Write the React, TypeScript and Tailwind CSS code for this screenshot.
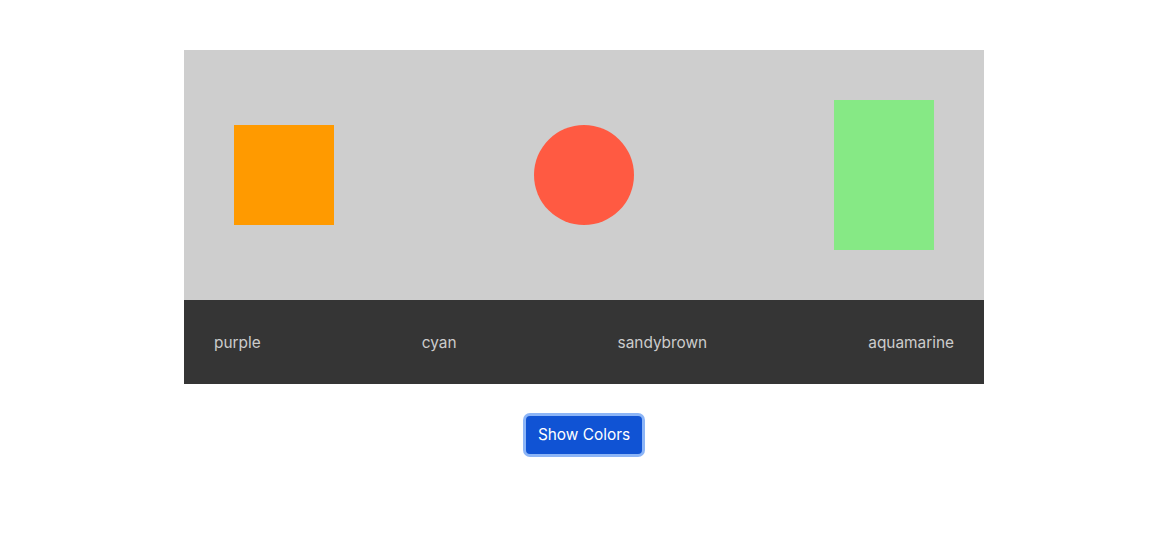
export default function App() {
  const labels = ['purple', 'cyan', 'sandybrown', 'aquamarine'];

  return (
    <div className="flex flex-col items-center bg-white pt-[50px] pb-[100px] pl-[6px] font-['Inter','Liberation_Sans',sans-serif]">
      <div className="w-[800px]">
        <div className="flex h-[250px] items-center justify-between bg-[#cecece] px-[50px]">
          <div className="h-[100px] w-[100px] bg-[#ff9a00]" />
          <div className="h-[100px] w-[100px] rounded-full bg-[#ff5a42]" />
          <div className="h-[150px] w-[100px] bg-[#86e985]" />
        </div>
        <div className="flex h-[84px] items-center justify-between bg-[#353535] px-[30px] pt-px text-[15.4px] text-[#cccccc]">
          {labels.map((label) => (
            <span key={label}>{label}</span>
          ))}
        </div>
      </div>
      <button className="mt-8 h-[38px] w-[116px] rounded-[4px] bg-[#1053d4] text-[15.4px] text-white ring-[3px] ring-[#8cb5f7]">
        Show Colors
      </button>
    </div>
  );
}
